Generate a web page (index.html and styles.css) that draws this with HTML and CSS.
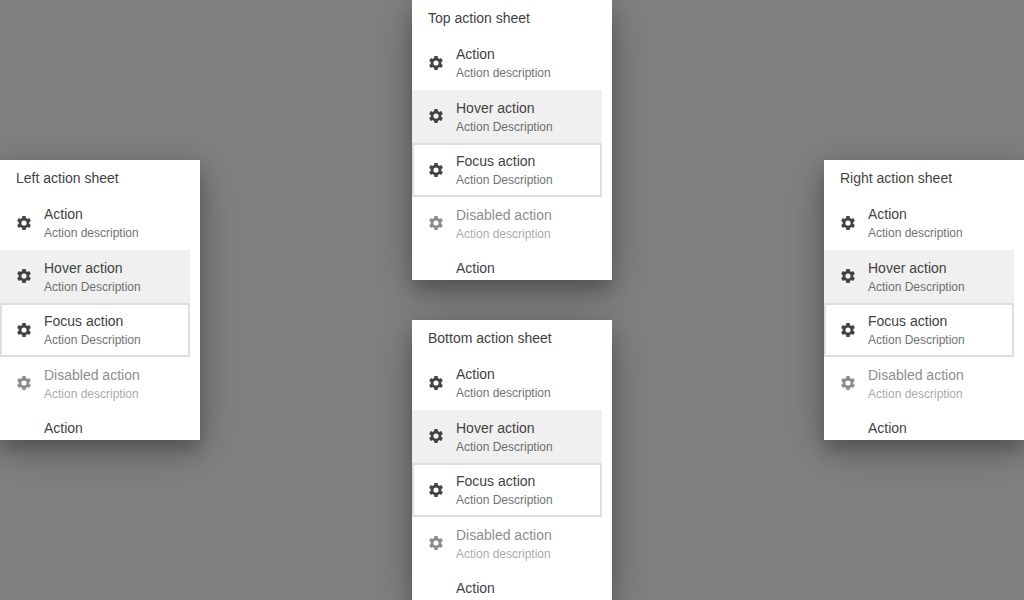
FILE: index.html
```
<!DOCTYPE html>
<html lang="en">
<head>
<meta charset="utf-8">
<meta name="viewport" content="width=device-width, initial-scale=1">
<title>Action sheets</title>
<link rel="stylesheet" href="styles.css">
</head>
<body>
<svg class="sprite" aria-hidden="true">
  <symbol id="gear" viewBox="0 0 16 16">
    <circle cx="8" cy="8" r="4" fill="none" stroke="currentColor" stroke-width="2.800"/>
    <path d="M6.300 1h3.400v3H6.300zM6.300 12h3.400v3H6.300z"/>
    <path d="M6.300 1h3.400v3H6.300zM6.300 12h3.400v3H6.300z" transform="rotate(60 8 8)"/>
    <path d="M6.300 1h3.400v3H6.300zM6.300 12h3.400v3H6.300z" transform="rotate(120 8 8)"/>
  </symbol>
</svg>
<main class="stage">
  <section class="sheet">
    <h2 class="sheet-title">Left action sheet</h2>
    <div class="actions">
      <button class="action" type="button"><svg class="icon"><use href="#gear"/></svg><span class="text"><span class="name">Action</span><span class="description">Action description</span></span></button>
      <button class="action is-hover" type="button"><svg class="icon"><use href="#gear"/></svg><span class="text"><span class="name">Hover action</span><span class="description">Action Description</span></span></button>
      <button class="action is-focus" type="button"><svg class="icon"><use href="#gear"/></svg><span class="text"><span class="name">Focus action</span><span class="description">Action Description</span></span></button>
      <button class="action" type="button" disabled><svg class="icon"><use href="#gear"/></svg><span class="text"><span class="name">Disabled action</span><span class="description">Action description</span></span></button>
      <button class="action" type="button"><span class="icon"></span><span class="text"><span class="name">Action</span></span></button>
    </div>
  </section>
  <div class="middle">
    <section class="sheet">
      <h2 class="sheet-title">Top action sheet</h2>
      <div class="actions">
        <button class="action" type="button"><svg class="icon"><use href="#gear"/></svg><span class="text"><span class="name">Action</span><span class="description">Action description</span></span></button>
        <button class="action is-hover" type="button"><svg class="icon"><use href="#gear"/></svg><span class="text"><span class="name">Hover action</span><span class="description">Action Description</span></span></button>
        <button class="action is-focus" type="button"><svg class="icon"><use href="#gear"/></svg><span class="text"><span class="name">Focus action</span><span class="description">Action Description</span></span></button>
        <button class="action" type="button" disabled><svg class="icon"><use href="#gear"/></svg><span class="text"><span class="name">Disabled action</span><span class="description">Action description</span></span></button>
        <button class="action" type="button"><span class="icon"></span><span class="text"><span class="name">Action</span></span></button>
      </div>
    </section>
    <section class="sheet">
      <h2 class="sheet-title">Bottom action sheet</h2>
      <div class="actions">
        <button class="action" type="button"><svg class="icon"><use href="#gear"/></svg><span class="text"><span class="name">Action</span><span class="description">Action description</span></span></button>
        <button class="action is-hover" type="button"><svg class="icon"><use href="#gear"/></svg><span class="text"><span class="name">Hover action</span><span class="description">Action Description</span></span></button>
        <button class="action is-focus" type="button"><svg class="icon"><use href="#gear"/></svg><span class="text"><span class="name">Focus action</span><span class="description">Action Description</span></span></button>
        <button class="action" type="button" disabled><svg class="icon"><use href="#gear"/></svg><span class="text"><span class="name">Disabled action</span><span class="description">Action description</span></span></button>
        <button class="action" type="button"><span class="icon"></span><span class="text"><span class="name">Action</span></span></button>
      </div>
    </section>
  </div>
  <section class="sheet">
    <h2 class="sheet-title">Right action sheet</h2>
    <div class="actions">
      <button class="action" type="button"><svg class="icon"><use href="#gear"/></svg><span class="text"><span class="name">Action</span><span class="description">Action description</span></span></button>
      <button class="action is-hover" type="button"><svg class="icon"><use href="#gear"/></svg><span class="text"><span class="name">Hover action</span><span class="description">Action Description</span></span></button>
      <button class="action is-focus" type="button"><svg class="icon"><use href="#gear"/></svg><span class="text"><span class="name">Focus action</span><span class="description">Action Description</span></span></button>
      <button class="action" type="button" disabled><svg class="icon"><use href="#gear"/></svg><span class="text"><span class="name">Disabled action</span><span class="description">Action description</span></span></button>
      <button class="action" type="button"><span class="icon"></span><span class="text"><span class="name">Action</span></span></button>
    </div>
  </section>
</main>
</body>
</html>
```
FILE: styles.css
```
* {
  box-sizing: border-box;
}

body {
  margin: 0;
  background: #808080;
  color: #424242;
  font: 14px/20px "Liberation Sans", Arial, sans-serif;
}

.sprite {
  display: none;
}

.stage {
  display: flex;
  align-items: center;
  justify-content: space-between;
  min-height: 100vh;
  overflow: hidden;
}

.middle {
  display: flex;
  flex-direction: column;
  align-self: stretch;
  justify-content: space-between;
  gap: 40px;
}

.sheet {
  width: 200px;
  max-height: 280px;
  overflow: hidden;
  background: #fff;
  box-shadow: 0 10px 16px rgba(0, 0, 0, 0.18), 0 10px 38px rgba(0, 0, 0, 0.28);
}

.sheet-title {
  margin: 0;
  padding: 8px 16px;
  font-size: 14px;
  font-weight: 400;
}

.actions {
  display: grid;
  grid-auto-rows: minmax(54px, auto) minmax(53px, auto);
  padding-right: 10px;
}

.action {
  display: flex;
  align-items: center;
  gap: 12px;
  padding: 0 16px;
  border: 0;
  background: none;
  color: inherit;
  font: inherit;
  text-align: left;
}

.action:nth-child(even) .icon {
  margin-bottom: 1px;
}

.icon {
  flex: none;
  width: 16px;
  height: 16px;
  fill: currentColor;
}

.text {
  display: flex;
  flex-direction: column;
  align-self: flex-start;
  padding: 8px 0 6px;
}

.description {
  font-size: 12px;
  line-height: 19px;
  opacity: 0.75;
}

.is-hover {
  background: #f0f0f0;
}

.is-focus {
  box-shadow: inset 0 0 0 2px #dedede;
}

.action:disabled {
  opacity: 0.6;
}
```
